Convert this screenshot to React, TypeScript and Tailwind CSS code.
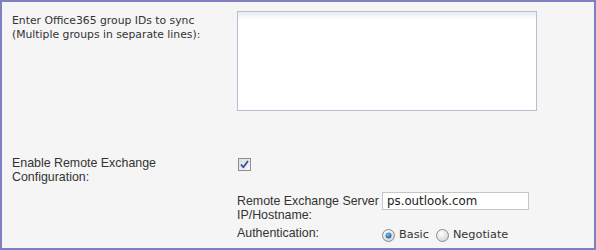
import React from "react";

const tahoma = { fontFamily: '"DejaVu Sans", Verdana, sans-serif' };
const arial = { fontFamily: '"Liberation Sans", Arial, sans-serif' };

function CheckBox() {
  return (
    <div className="w-[13px] h-[13px] border border-[#8e8f8f] bg-[linear-gradient(135deg,#dcdcdc,#f7f7f7)] flex items-center justify-center">
      <svg width="11" height="11" viewBox="0 0 11 11">
        <path d="M2 5.5 L4.3 8.3 L9 2" fill="none" stroke="#2f4f9f" strokeWidth="1.8" strokeLinejoin="round" />
      </svg>
    </div>
  );
}

function Radio({ checked }: { checked?: boolean }) {
  return (
    <svg width="13" height="13" viewBox="0 0 13 13" className="shrink-0">
      <defs>
        <radialGradient id="rg" cx="40%" cy="35%" r="65%">
          <stop offset="0" stopColor="#ffffff" />
          <stop offset="1" stopColor="#d6d6d6" />
        </radialGradient>
        <radialGradient id="dot" cx="40%" cy="35%" r="70%">
          <stop offset="0" stopColor="#7ac0ee" />
          <stop offset="1" stopColor="#1c5a95" />
        </radialGradient>
      </defs>
      <circle cx="6.5" cy="6.5" r="6" fill="url(#rg)" stroke="#8b8b8b" strokeWidth="1" />
      {checked && <circle cx="6.5" cy="6.5" r="3" fill="url(#dot)" />}
    </svg>
  );
}

export default function App() {
  return (
    <div className="w-[596px] h-[250px] border-2 border-[#7f7fc1] bg-[#f5f5f5] text-[#333333] overflow-hidden">
      <div className="pl-[10px] pt-[9px] grid grid-cols-[225px_1fr]">
        <div className="pt-[3px] text-[10.8px] leading-[14px] whitespace-nowrap" style={tahoma}>
          Enter Office365 group IDs to sync
          <br />
          (Multiple groups in separate lines):
        </div>
        <div>
          <div className="w-[300px] h-[100px] border border-[#b7bdd2] bg-[linear-gradient(to_bottom,#e6eeee,#ffffff_8px)]" />
        </div>

        <div className="mt-[45px] text-[12.4px] leading-[14px] whitespace-nowrap" style={arial}>
          Enable Remote Exchange
          <br />
          Configuration:
        </div>
        <div className="mt-[47px] pl-[1px]">
          <CheckBox />
        </div>

        <div />
        <div className="mt-[8px] grid grid-cols-[145px_1fr] text-[12.4px] leading-[15px]" style={arial}>
          <div className="pt-[2px] leading-[14px] whitespace-nowrap">
            Remote Exchange Server
            <br />
            IP/Hostname:
          </div>
          <div>
            <div
              className="w-[147px] h-[18px] border border-[#c6c6c6] bg-white pl-[4px] text-[11.8px] leading-[16px] text-[#222] whitespace-nowrap"
              style={tahoma}
            >
              ps.outlook.com
            </div>
          </div>
          <div className="mt-[4px] whitespace-nowrap">Authentication:</div>
          <div className="mt-[6px] flex items-center text-[11.3px] leading-[14px] whitespace-nowrap" style={tahoma}>
            <Radio checked />
            <span className="ml-[4px]">Basic</span>
            <span className="ml-[7px] flex">
              <Radio />
            </span>
            <span className="ml-[4px]">Negotiate</span>
          </div>
        </div>
      </div>
    </div>
  );
}
